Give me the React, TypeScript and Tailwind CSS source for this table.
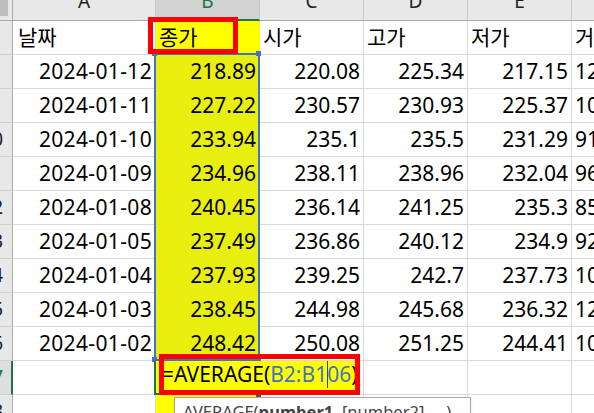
import React from "react";

const W = ["w-[143px]", "w-[104px]", "w-[104px]", "w-[104px]", "w-[104px]", "w-[104px]"];

const data: { h: string; c: string[] }[] = [
  { h: "", c: ["2024-01-12", "218.89", "220.08", "225.34", "217.15", "127152800"] },
  { h: "", c: ["2024-01-11", "227.22", "230.57", "230.93", "225.37", "107970300"] },
  { h: "100", c: ["2024-01-10", "233.94", "235.1", "235.5", "231.29", "91486300"] },
  { h: "101", c: ["2024-01-09", "234.96", "238.11", "238.96", "232.04", "96705800"] },
  { h: "102", c: ["2024-01-08", "240.45", "236.14", "241.25", "235.3", "85166600"] },
  { h: "103", c: ["2024-01-05", "237.49", "236.86", "240.12", "234.9", "92488900"] },
  { h: "104", c: ["2024-01-04", "237.93", "239.25", "242.7", "237.73", "104516900"] },
  { h: "105", c: ["2024-01-03", "238.45", "244.98", "245.68", "236.32", "121082600"] },
  { h: "106", c: ["2024-01-02", "248.42", "250.08", "251.25", "244.41", "103585900"] },
];

function RowHeader({ label, sel }: { label: string; sel?: boolean }) {
  return (
    <div
      className={`flex h-full w-[13px] shrink-0 justify-end overflow-hidden whitespace-nowrap border-b border-b-[#cfcfcf] text-[19px] leading-[33px] ${
        sel
          ? "border-r-2 border-r-[#217346] bg-[#dedede] pr-[8px] text-[#217346]"
          : "border-r border-r-[#ababab] bg-[#e8e8e8] pr-[9px] text-[#222]"
      }`}
    >
      <span className="shrink-0">{label}</span>
    </div>
  );
}

const CELL = "h-full shrink-0 overflow-hidden whitespace-nowrap border-b border-r text-[21px] leading-[33px]";

export default function App() {
  return (
    <div className="relative h-[413px] w-[594px] overflow-hidden bg-white font-['Noto_Sans','Noto_Sans_CJK_KR',sans-serif] text-black">
      {/* column header */}
      <div className="flex h-[21px]">
        <div className="h-full w-[13px] shrink-0 border-b border-r border-[#ababab] bg-[#e8e8e8]">
          <div className="h-[16px] w-[8px] bg-[#bdbdbd]" />
        </div>
        {["A", "B", "C", "D", "E", "F"].map((c, i) => (
          <div
            key={c}
            className={`flex h-full shrink-0 justify-center overflow-hidden border-r border-r-[#c8c8c8] text-[19px] leading-[19px] ${W[i]} ${
              c === "B"
                ? "border-b-2 border-b-[#217346] bg-[#d2d2d2] text-[#217346]"
                : "border-b border-b-[#ababab] bg-[#e8e8e8] text-[#222]"
            }`}
          >
            <span className="-mt-[8px]">{c}</span>
          </div>
        ))}
      </div>

      {/* label row */}
      <div className="flex h-[34px]">
        <RowHeader label="" />
        {["날짜", "종가", "시가", "고가", "저가", "거래량"].map((t, i) => (
          <div
            key={t}
            className={`${CELL} ${W[i]} ${i === 0 ? "pl-[5px]" : "pl-[3px]"} ${
              i === 1 ? "border-[#ffff00] bg-[#ffff00]" : "border-[#d9d9d9]"
            }`}
          >
            {t}
          </div>
        ))}
      </div>

      {/* data rows */}
      {data.map((r) => (
        <div key={r.c[0]} className="flex h-[34px]">
          <RowHeader label={r.h} />
          {r.c.map((t, i) => (
            <div
              key={i}
              className={`${CELL} ${W[i]} ${i === 5 ? "pl-[3px]" : "pr-[3px] text-right"} ${
                i === 0 ? "tracking-[0.35px]" : ""
              } ${i === 1 ? "border-[#e8ef0e] bg-[#e8ef0e]" : "border-[#d9d9d9]"}`}
            >
              {t}
            </div>
          ))}
        </div>
      ))}

      {/* formula row 107 */}
      <div className="flex h-[34px]">
        <RowHeader label="107" sel />
        {[0, 1, 2, 3, 4, 5].map((i) => (
          <div
            key={i}
            className={`${CELL} ${W[i]} ${i === 1 ? "border-[#ffff00] bg-[#ffff00]" : "border-[#d9d9d9]"}`}
          />
        ))}
      </div>

      {/* row 108 */}
      <div className="flex h-[34px]">
        <RowHeader label="108" />
        {[0, 1, 2, 3, 4, 5].map((i) => (
          <div
            key={i}
            className={`${CELL} ${W[i]} ${i === 1 ? "border-[#ffff00] bg-[#ffff00]" : "border-[#d9d9d9]"}`}
          />
        ))}
      </div>

      {/* range selection border B2:B106 */}
      <div className="absolute left-[154px] top-[53px] h-[308px] w-[106px] border-2 border-[#4472c4]" />
      <div className="absolute left-[152px] top-[51px] h-[5px] w-[5px] bg-[#4472c4]" />
      <div className="absolute left-[256px] top-[51px] h-[5px] w-[5px] bg-[#4472c4]" />
      <div className="absolute left-[152px] top-[357px] h-[5px] w-[5px] bg-[#4472c4]" />
      <div className="absolute left-[256px] top-[357px] h-[5px] w-[5px] bg-[#4472c4]" />

      {/* active cell B107 */}
      <div className="absolute left-[154px] top-[361px] h-[34px] w-[106px] border-2 border-[#217346]" />
      <div className="absolute left-[256px] top-[392px] h-[5px] w-[5px] bg-[#217346]" />

      {/* in-cell editor */}
      <div className="absolute left-[156px] top-[361px] h-[32px] w-[202px] whitespace-nowrap bg-[#ffff00] pl-[6px] text-[21px] leading-[26px]">
        <span>=AVERAGE(</span>
        <span className="text-[#4472c4]">B2:B1</span>
        <span className="-mr-px inline-block h-[27px] w-px bg-[#1d3fd8] align-top" />
        <span className="text-[#4472c4]">06</span>
        <span>)</span>
      </div>

      {/* red highlight boxes */}
      <div className="absolute left-[148px] top-[17px] h-[37px] w-[90px] border-[5px] border-[#ff0000]" />
      <div className="absolute left-[159px] top-[354px] h-[41px] w-[201px] border-[5px] border-[#ff0000]" />

      {/* tooltip */}
      <div className="absolute left-[174px] top-[397px] h-[30px] w-[297px] whitespace-nowrap border border-[#a8a8a8] bg-white pl-[8px] pt-[6px] text-[16.5px] leading-[16px] text-[#444] shadow-sm">
        AVERAGE(<span className="font-bold">number1</span>, [number2], ...)
      </div>
    </div>
  );
}
